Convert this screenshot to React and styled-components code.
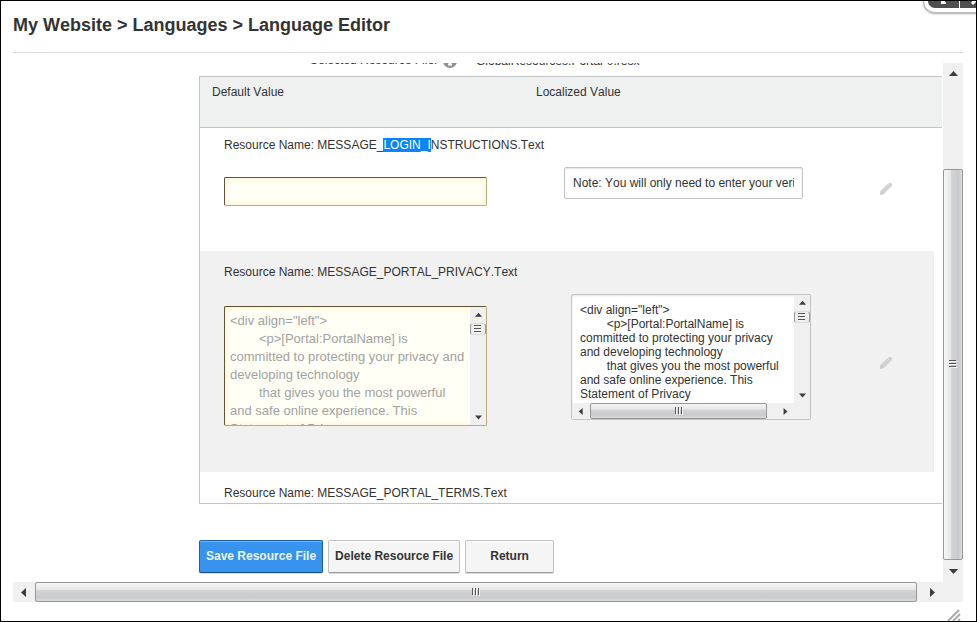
import React from "react";
import styled, { createGlobalStyle, css } from "styled-components";

const GlobalStyle = createGlobalStyle`
  *, *::before, *::after { box-sizing: border-box; }
  body {
    margin: 0;
    background: #fff;
    color: #333;
    font: 12px/14px "Liberation Sans", Arial, sans-serif;
    font-kerning: none;
  }
  h1 { margin: 0; }
  input, textarea, button { font-kerning: none; }
`;

const Dialog = styled.main`
  position: relative;
  display: flex;
  flex-direction: column;
  min-height: 100vh;
  padding: 12px 13px 19px 12px;
  border: 1px solid #000;
  overflow: hidden;
`;

const Title = styled.h1`
  padding-bottom: 15px;
  margin-bottom: 10px;
  border-bottom: 1px solid #ddd;
  font-size: 18px;
  line-height: 24px;
`;

const WindowControls = styled.div`
  position: absolute;
  top: -12px;
  right: -20px;
  display: flex;
  gap: 1px;
  width: 73px;
  height: 24px;
  padding: 4px;
  border: 1px solid #bbb;
  border-radius: 12px;
  background: #fff;
  box-shadow: 0 1px 2px #aaa;
`;

const WindowButton = styled.button`
  display: flex;
  align-items: flex-end;
  justify-content: center;
  width: 32px;
  padding: 0 0 3px;
  border: 0;
  border-radius: ${(p) => (p.$first ? "8px 0 0 8px" : "0 8px 8px 0")};
  background: #504e50;
`;

const ResizeGrip = styled.svg`
  position: absolute;
  right: 15px;
  bottom: 0;
`;

const ScrollPane = styled.div`
  flex: 1;
  display: grid;
  grid-template-columns: minmax(0, 1fr) 20px;
  grid-template-rows: 1fr 20px;
`;

const Content = styled.section`
  padding: 0 1px 0 186px;
  overflow: hidden;
`;

const FileRow = styled.div`
  display: flex;
  align-items: flex-end;
  height: 5px;
  margin-bottom: 8px;
  padding-left: 111px;
  overflow: hidden;
`;

const FileLabel = styled.span`
  width: 133px;
  padding-bottom: 1px;
  white-space: nowrap;
`;

const FileName = styled.span`
  padding-left: 19px;
  white-space: nowrap;
`;

const Panel = styled.div`
  border: 1px solid #c4c4c4;
  border-right: 0;
`;

const ResourceTable = styled.table`
  width: 100%;
  table-layout: fixed;
  border-collapse: separate;
  border-spacing: 0;
`;

const Column = styled.col`
  width: ${(p) => p.$width};
`;

const HeadCell = styled.th`
  height: 51px;
  padding: 8px 12px;
  border-bottom: 1px solid #c4c4c4;
  background: #eff1f1;
  font-weight: normal;
  text-align: left;
  vertical-align: top;
`;

const Group = styled.tbody`
  background: ${(p) => (p.$alternate ? "#f1f1f1" : "#fff")};

  td:last-child, th:last-child { border-right: 8px solid #fff; }
`;

const NameCell = styled.th`
  padding: ${(p) => (p.$first ? "10px" : "14px")} 0 0 24px;
  font-weight: normal;
  text-align: left;

  ${(p) => p.$last && css`padding-bottom: 3px;`}
`;

const Highlight = styled.mark`
  background: #0a84ff;
  color: #fff;
`;

const DefaultCell = styled.td`
  padding: ${(p) => (p.$area ? "27px 0 46px 24px" : "25px 0 45px 24px")};
  vertical-align: top;
`;

const LocalCell = styled.td`
  padding: ${(p) => (p.$area ? "15px 0 0 47px" : "15px 0 0 40px")};
  vertical-align: top;
`;

const EditCell = styled.td`
  padding: 22px 41px 45px 0;
  text-align: right;
  vertical-align: middle;
`;

const EditButton = styled.button`
  display: inline-flex;
  padding: 0;
  border: 0;
  background: none;
`;

const defaultSkin = css`
  border: 1px solid #b9ab7b;
  border-top-color: #5e5537;
  border-left-color: #5e5537;
  border-radius: 2px;
  background: #fffff5;
  box-shadow: inset 0 0 5px 1px #fff1cc;
`;

const localSkin = css`
  border: 1px solid #c4c4c4;
  border-radius: 2px;
  background: #fff;
  box-shadow: inset 0 1px 2px #e4e4e4;
`;

const TextField = styled.input`
  display: block;
  width: ${(p) => (p.$local ? "239px" : "263px")};
  height: ${(p) => (p.$local ? "32px" : "29px")};
  padding: 0 8px;
  font: inherit;
  color: #333;
  ${(p) => (p.$local ? localSkin : defaultSkin)}
`;

const AreaFrame = styled.div`
  display: grid;
  grid-template-columns: 1fr 16px;
  grid-template-rows: ${(p) => (p.$local ? "1fr 16px" : "1fr")};
  width: ${(p) => (p.$local ? "240px" : "263px")};
  height: ${(p) => (p.$local ? "126px" : "120px")};
  overflow: hidden;
  ${(p) => (p.$local ? localSkin : defaultSkin)}
`;

const Area = styled.textarea`
  display: block;
  width: 100%;
  height: 100%;
  min-height: 0;
  margin: 0;
  padding: ${(p) => (p.$local ? "8px 6px 0 8px" : "5px 0 0 5px")};
  border: 0;
  background: transparent;
  color: ${(p) => (p.$local ? "#333" : "#a2a2a2")};
  font: ${(p) => (p.$local ? "12px/14px" : "13px/18px")} "Liberation Sans", Arial, sans-serif;
  font-kerning: none;
  resize: none;
  overflow: hidden;
`;

const Track = styled.div`
  display: flex;
  flex-direction: ${(p) => (p.$vertical ? "column" : "row")};
  background: #f0f0f0;
  min-width: 0;
  min-height: 0;
`;

const ArrowBox = styled.span`
  flex: 0 0 ${(p) => p.$size};
  display: flex;
  align-items: center;
  justify-content: center;
`;

const Thumb = styled.span`
  flex: 0 0 ${(p) => p.$length};
  display: flex;
  align-items: center;
  justify-content: center;
  border: 1px solid #979797;
  border-radius: 2px;
  background: linear-gradient(
    ${(p) => (p.$vertical ? "to right" : "to bottom")},
    #f6f6f6, #e6e6e8 38%, #d2d3d6 42%, #c9cacd 80%, #dcdcde
  );
  ${(p) => p.$small && css`
    border-color: #ddd #999;
    border-radius: 3px;
    background: #eee;
  `}
`;

const Gap = styled.span`
  flex: ${(p) => p.$grow} 1 0;
`;

const Corner = styled.div`
  background: #f0f0f0;
`;

const Actions = styled.div`
  display: flex;
  gap: 5px;
  padding: 36px 0 9px;
`;

const ActionButton = styled.button`
  min-width: 89px;
  height: 33px;
  padding: 0 6px 2px;
  border: 1px solid ${(p) => (p.$primary ? "#1b5fa8" : "#c2c2c2")};
  border-bottom-color: ${(p) => (p.$primary ? "#174f8c" : "#9c9c9c")};
  border-radius: 2px;
  background: ${(p) => (p.$primary ? "#3793ee" : "#f5f5f5")};
  box-shadow: inset 0 1px 0 ${(p) => (p.$primary ? "#6fb6fa" : "#fff")}, 0 1px 0 #ddd;
  color: ${(p) => (p.$primary ? "#e8f4ff" : "#333")};
  font: bold 12px/14px "Liberation Sans", Arial, sans-serif;
  white-space: nowrap;
`;

const arrows = {
  up: "M0 6 L4.5 1 L9 6Z",
  down: "M0 2 L4.5 7 L9 2Z",
  left: "M6 0 L1 4.5 L6 9Z",
  right: "M2 0 L7 4.5 L2 9Z",
};

function Arrow({ direction, small }) {
  const size = small ? 7 : 9;
  return (
    <svg width={size} height={size} viewBox="0 0 9 9">
      <path d={arrows[direction]} fill="#3c3c3c" />
    </svg>
  );
}

function Grip({ vertical }) {
  return (
    <svg width="8" height="8" viewBox="0 0 8 8" shapeRendering="crispEdges">
      <path
        d={vertical ? "M0 .5H7M0 3.5H7M0 6.5H7" : "M.5 0V7M3.5 0V7M6.5 0V7"}
        stroke="#555"
      />
      <path
        d={vertical ? "M1 1.5H8M1 4.5H8M1 7.5H8" : "M1.5 1V8M4.5 1V8M7.5 1V8"}
        stroke="#f5f5f5"
      />
    </svg>
  );
}

function ScrollBar({ vertical, length, before = 0, after = 0, button = "16px", small, smallThumb }) {
  return (
    <Track $vertical={vertical} aria-hidden="true">
      <ArrowBox $size={button}>
        <Arrow direction={vertical ? "up" : "left"} small={small} />
      </ArrowBox>
      {before > 0 && <Gap $grow={before} />}
      <Thumb $vertical={vertical} $length={length} $small={smallThumb}>
        <Grip vertical={vertical} />
      </Thumb>
      {after > 0 && <Gap $grow={after} />}
      <ArrowBox $size={button}>
        <Arrow direction={vertical ? "down" : "right"} small={small} />
      </ArrowBox>
    </Track>
  );
}

function Pencil() {
  return (
    <svg width="14" height="14" viewBox="0 0 14 14">
      <path d="M1 13 L1.5 9 L9.5 1.5 Q11 .5 12.5 1.5 Q13.5 3 12.5 4.5 L4.5 12.2Z" fill="#cacaca" />
      <path d="M3 9.5 L9.5 3.2 M4.6 11 L11 4.8 M9 2 L12 5" stroke="#e6e6e6" strokeWidth="0.8" fill="none" />
    </svg>
  );
}

const policy = `<div align="left">
\t<p>[Portal:PortalName] is committed to protecting your privacy and developing technology
\tthat gives you the most powerful and safe online experience. This Statement of Privacy`;

function EditAction({ name }) {
  return (
    <EditCell>
      <EditButton type="button" aria-label={`Edit ${name}`}>
        <Pencil />
      </EditButton>
    </EditCell>
  );
}

export default function App() {
  return (
    <>
      <GlobalStyle />
      <Dialog>
        <WindowControls>
          <WindowButton $first type="button" aria-label="Restore">
            <svg width="7" height="5" viewBox="0 0 7 5">
              <path d="M1 0H5V2H6V4H1Z" fill="#fff" />
            </svg>
          </WindowButton>
          <WindowButton type="button" aria-label="Close">
            <svg width="10" height="5" viewBox="0 0 10 5">
              <path d="M2 0H8L10 3L8 5L5 2L2 5L0 3Z" fill="#fff" />
            </svg>
          </WindowButton>
        </WindowControls>
        <Title>My Website &gt; Languages &gt; Language Editor</Title>
        <ScrollPane>
          <Content>
            <FileRow>
              <FileLabel>Selected Resource File:</FileLabel>
              <svg width="14" height="14" viewBox="0 0 14 14">
                <circle cx="7" cy="7" r="7" fill="#929292" />
                <path d="M5 10.5H9M7 6V11" stroke="#fff" strokeWidth="2" />
              </svg>
              <FileName>GlobalResources.Portal-0.resx</FileName>
            </FileRow>
            <Panel>
              <ResourceTable>
                <colgroup>
                  <Column $width="324px" />
                  <Column $width="auto" />
                  <Column $width="108px" />
                </colgroup>
                <thead>
                  <tr>
                    <HeadCell scope="col">Default Value</HeadCell>
                    <HeadCell scope="col" colSpan={2}>Localized Value</HeadCell>
                  </tr>
                </thead>
                <Group>
                  <tr>
                    <NameCell $first colSpan={3} scope="rowgroup">
                      Resource Name: MESSAGE_<Highlight>LOGIN_I</Highlight>NSTRUCTIONS.Text
                    </NameCell>
                  </tr>
                  <tr>
                    <DefaultCell>
                      <TextField aria-label="Default login instructions" disabled />
                    </DefaultCell>
                    <LocalCell>
                      <TextField
                        $local
                        aria-label="Localized login instructions"
                        defaultValue="Note: You will only need to enter your verification code once"
                      />
                    </LocalCell>
                    <EditAction name="login instructions" />
                  </tr>
                </Group>
                <Group $alternate>
                  <tr>
                    <NameCell colSpan={3} scope="rowgroup">
                      Resource Name: MESSAGE_PORTAL_PRIVACY.Text
                    </NameCell>
                  </tr>
                  <tr>
                    <DefaultCell $area>
                      <AreaFrame>
                        <Area aria-label="Default portal privacy" disabled defaultValue={policy} />
                        <ScrollBar vertical small smallThumb length="12px" after={1} />
                      </AreaFrame>
                    </DefaultCell>
                    <LocalCell $area>
                      <AreaFrame $local>
                        <Area $local aria-label="Localized portal privacy" defaultValue={policy} />
                        <ScrollBar vertical small smallThumb length="12px" after={1} />
                        <ScrollBar small length="177px" button="18px" after={1} />
                        <Corner />
                      </AreaFrame>
                    </LocalCell>
                    <EditAction name="portal privacy" />
                  </tr>
                </Group>
                <Group>
                  <tr>
                    <NameCell $last colSpan={3} scope="rowgroup">
                      Resource Name: MESSAGE_PORTAL_TERMS.Text
                    </NameCell>
                  </tr>
                </Group>
              </ResourceTable>
            </Panel>
            <Actions>
              <ActionButton $primary type="button">Save Resource File</ActionButton>
              <ActionButton type="button">Delete Resource File</ActionButton>
              <ActionButton type="button">Return</ActionButton>
            </Actions>
          </Content>
          <ScrollBar vertical length="calc(75% + 2px)" before={1} button="22px" />
          <ScrollBar length="calc(95% - 2px)" after={1} button="22px" />
          <Corner />
        </ScrollPane>
        <ResizeGrip width="14" height="12" viewBox="0 0 14 12" aria-hidden="true">
          <path d="M1 12 L12 1 M6 12 L13 5 M11 12 L13 10" stroke="#aaa" strokeWidth="2" />
        </ResizeGrip>
      </Dialog>
    </>
  );
}
